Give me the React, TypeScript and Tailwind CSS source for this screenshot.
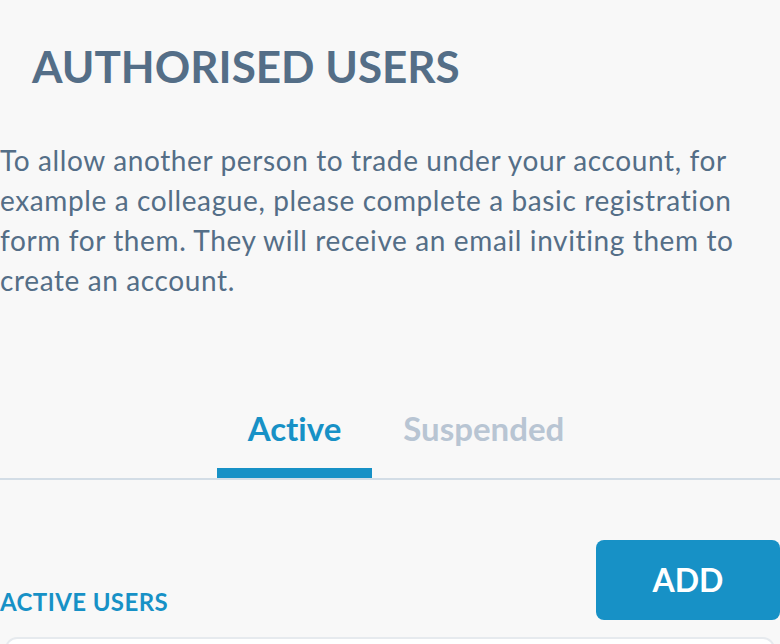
import React, { useState } from "react";

const tabs = ["Active", "Suspended"];

export default function App() {
  const [tab, setTab] = useState("Active");

  return (
    <div className="h-[644px] w-[780px] overflow-hidden bg-[#f8f8f8] font-['Lato',sans-serif] text-[#546e87] [font-variant-ligatures:none]">
      {/* titre */}
      <h1 className="pl-8 pt-[38px] text-[44px] font-bold leading-[56px]">
        AUTHORISED USERS
      </h1>

      <p className="mt-[46px] text-[28px] leading-[40px] tracking-[0.62px]">
        To allow another person to trade under your account, for example a
        colleague, please complete a basic registration form for them. They
        will receive an email inviting them to create an account.
      </p>

      {/* onglets */}
      <div className="mt-[108px] flex justify-center border-b-2 border-[#d3dde6] pl-8">
        {tabs.map((t) => {
          const active = t === tab;
          return (
            <button
              key={t}
              onClick={() => setTab(t)}
              className={`border-b-[10px] px-[31px] pb-[20px] text-[33px] font-bold leading-[40px] ${
                active
                  ? "border-[#1791c6] text-[#1791c6]"
                  : "border-transparent text-[#b8c5d3]"
              }`}
            >
              {t}
            </button>
          );
        })}
      </div>

      <div className="mt-[60px] flex items-end justify-between">
        <h2 className="pb-[6px] text-[24px] font-bold leading-[24px] tracking-[0.4px] text-[#1791c6]">
          ACTIVE USERS
        </h2>
        <button className="h-20 w-[184px] rounded-lg bg-[#1791c6] text-[32px] font-bold text-white">
          ADD
        </button>
      </div>

      <div className="mx-[5px] mt-[17px] h-40 rounded-xl border-2 border-[#e6eaee] bg-white" />
    </div>
  );
}
